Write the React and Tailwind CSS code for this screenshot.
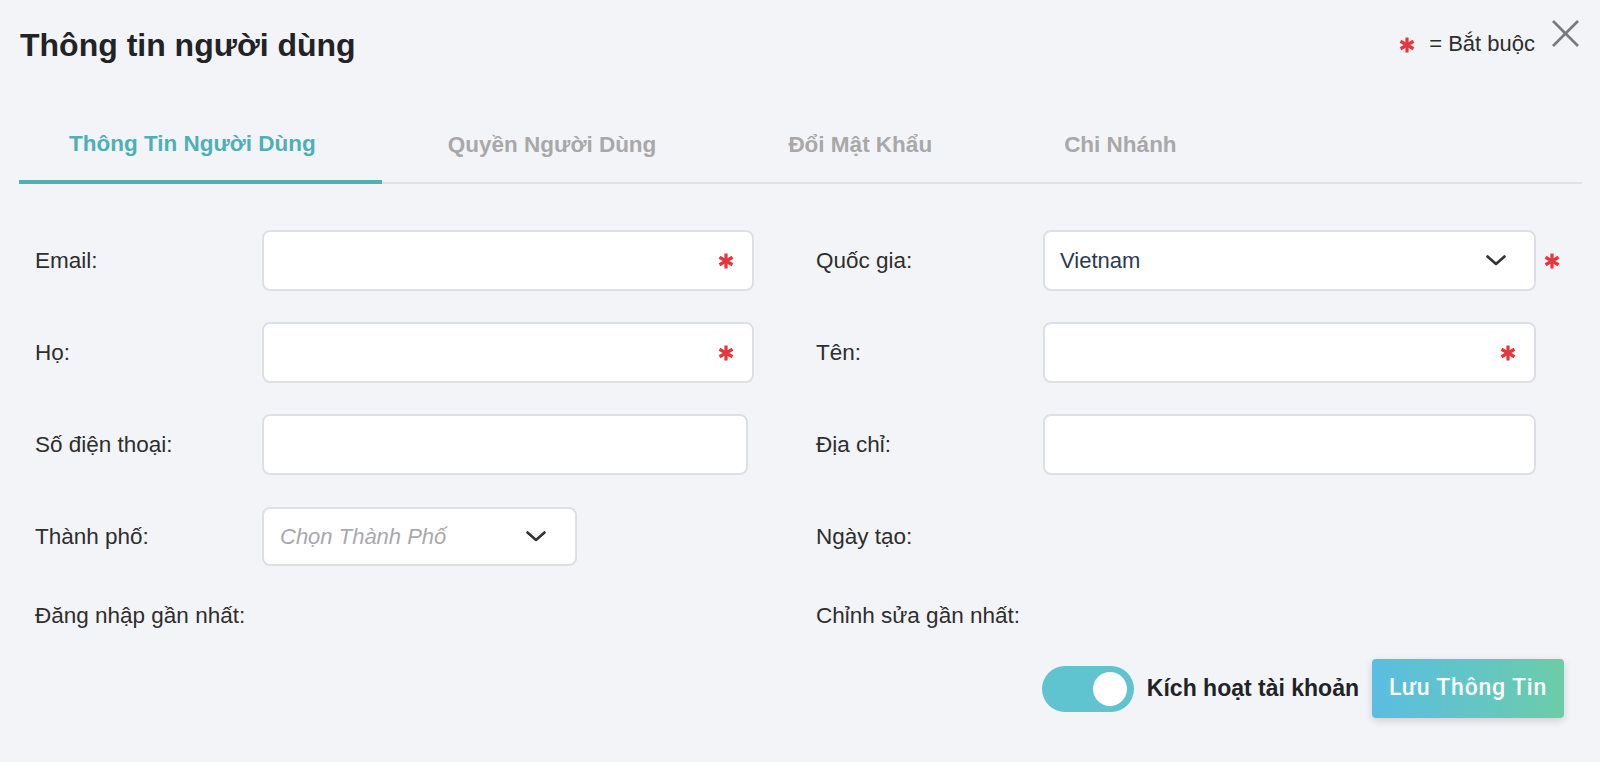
import React from "react";

const Asterisk = ({ className = "" }) => (
  <svg viewBox="0 0 16 16" className={className}>
    <g stroke="#e8353c" strokeWidth="3.2">
      <line x1="8" y1="0.5" x2="8" y2="15.5" />
      <line x1="1.5" y1="4.25" x2="14.5" y2="11.75" />
      <line x1="1.5" y1="11.75" x2="14.5" y2="4.25" />
    </g>
  </svg>
);

const Chevron = () => (
  <svg viewBox="0 0 20 11" className="w-[20px] h-[11px]">
    <polyline points="1.5,1.5 10,9 18.5,1.5" fill="none" stroke="#333" strokeWidth="2.6" strokeLinecap="round" strokeLinejoin="round" />
  </svg>
);

const Label = ({ children }) => (
  <div className="w-[227px] shrink-0 text-[22.5px] leading-[26px] text-[#2e2e2e] whitespace-nowrap">{children}</div>
);

const Input = ({ width, required }) => (
  <div className={`relative h-[61px] ${width} bg-white border-2 border-[#dcdfe4] rounded-[8px] flex items-center justify-end pr-[18px]`}>
    {required && <Asterisk className="w-[16px] h-[16px]" />}
  </div>
);

export default function App() {
  return (
    <div className="w-[1600px] h-[762px] bg-[#f3f4f8] font-['Liberation_Sans',Arial,sans-serif] overflow-hidden">
      {/* header */}
      <div className="flex items-start justify-between pt-[20px] pl-[20px] pr-[21px] h-[63px]">
        <div className="mt-[7px] text-[32px] leading-[36px] font-bold text-[#222326]">Thông tin người dùng</div>
        <div className="flex items-start">
          <Asterisk className="w-[16px] h-[16px] mt-[17px]" />
          <div className="ml-[14px] mt-[11px] text-[22px] leading-[26px] text-[#2e2e2e]">= Bắt buộc</div>
          <svg viewBox="0 0 27 27" className="ml-[17px] w-[27px] h-[27px]">
            <line x1="1" y1="1" x2="26" y2="26" stroke="#7a7a7a" strokeWidth="2.6" />
            <line x1="26" y1="1" x2="1" y2="26" stroke="#7a7a7a" strokeWidth="2.6" />
          </svg>
        </div>
      </div>

      {/* tabs */}
      <div className="mt-[51px] ml-[19px] mr-[18px] flex items-end border-b-2 border-[#dfe2e8]">
        <div className="h-[70px] -mb-[2px] pl-[50px] pr-[66px] pb-[6px] flex items-center border-b-4 border-[#4db1b4] text-[22.5px] font-bold text-[#4db1b4]">
          Thông Tin Người Dùng
        </div>
        <div className="h-[68px] px-[66px] pb-[6px] flex items-center text-[22.5px] font-bold text-[#a8a8a8]">Quyền Người Dùng</div>
        <div className="h-[68px] px-[66px] pb-[6px] flex items-center text-[22.5px] font-bold text-[#a8a8a8]">Đổi Mật Khẩu</div>
        <div className="h-[68px] px-[66px] pb-[6px] flex items-center text-[22.5px] font-bold text-[#a8a8a8]">Chi Nhánh</div>
      </div>

      {/* form */}
      <div className="mt-[46px] pl-[35px] grid grid-cols-[781px_1fr] gap-y-[31px]">
        <div className="flex items-center h-[61px]">
          <Label>Email:</Label>
          <Input width="w-[492px]" required />
        </div>
        <div className="flex items-center h-[61px]">
          <Label>Quốc gia:</Label>
          <div className="h-[61px] w-[493px] bg-white border-2 border-[#dcdfe4] rounded-[8px] flex items-center justify-between pl-[15px] pr-[28px]">
            <span className="text-[22px] text-[#2b3a55]">Vietnam</span>
            <Chevron />
          </div>
          <Asterisk className="w-[16px] h-[16px] ml-[8px]" />
        </div>

        <div className="flex items-center h-[61px]">
          <Label>Họ:</Label>
          <Input width="w-[492px]" required />
        </div>
        <div className="flex items-center h-[61px]">
          <Label>Tên:</Label>
          <Input width="w-[493px]" required />
        </div>

        <div className="flex items-center h-[61px]">
          <Label>Số điện thoại:</Label>
          <Input width="w-[486px]" />
        </div>
        <div className="flex items-center h-[61px]">
          <Label>Địa chỉ:</Label>
          <Input width="w-[493px]" />
        </div>

        <div className="flex items-center h-[61px]">
          <Label>Thành phố:</Label>
          <div className="h-[59px] w-[315px] bg-white border-2 border-[#dcdfe4] rounded-[8px] flex items-center justify-between pl-[16px] pr-[29px]">
            <span className="text-[22px] italic text-[#a9a9ad]">Chọn Thành Phố</span>
            <Chevron />
          </div>
        </div>
        <div className="flex items-center h-[61px]">
          <Label>Ngày tạo:</Label>
        </div>

        <div className="flex items-center h-[36px]">
          <Label>Đăng nhập gần nhất:</Label>
        </div>
        <div className="flex items-center h-[36px]">
          <Label>Chỉnh sửa gần nhất:</Label>
        </div>
      </div>

      {/* bottom */}
      <div className="mt-[25px] pr-[36px] flex items-center justify-end h-[59px]">
        <div className="w-[92px] h-[46px] rounded-full bg-[#5fc3d0] flex items-center justify-end pr-[7px]">
          <div className="w-[34px] h-[34px] rounded-full bg-white"></div>
        </div>
        <div className="ml-[13px] text-[23px] font-bold text-[#222326]">Kích hoạt tài khoản</div>
        <button className="ml-[13px] h-[59px] w-[192px] rounded-[4px] bg-gradient-to-r from-[#5abde2] to-[#6ccca8] shadow-[0_3px_8px_rgba(0,0,0,0.15)] text-white text-[23px] font-medium tracking-[0.035em] font-['Roboto',sans-serif]">
          Lưu Thông Tin
        </button>
      </div>
    </div>
  );
}
